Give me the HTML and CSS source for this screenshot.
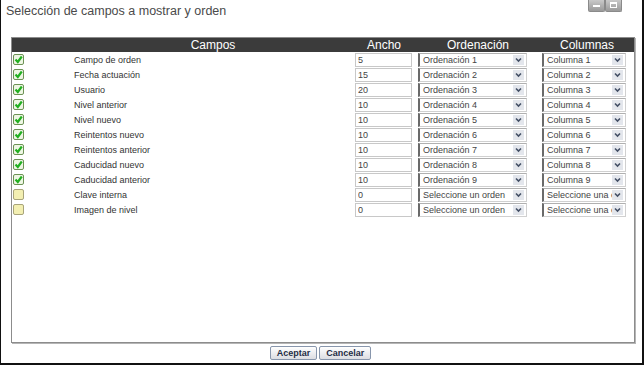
FILE: index.html
```html
<!DOCTYPE html>
<html lang="es">
<head>
<meta charset="utf-8">
<title>Selección de campos</title>
<link rel="stylesheet" href="styles.css">
</head>
<body>
<div class="dialog">
  <div class="titlebar">
    <div class="title">Selección de campos a mostrar y orden</div>
    <div class="winbtns">
      <span class="wb"><svg width="17" height="12" viewBox="0 0 17 12"><rect x="5" y="6" width="7" height="2" fill="#fff"/></svg></span>
      <span class="wb"><svg width="17" height="12" viewBox="0 0 17 12"><rect x="5.5" y="3.5" width="6" height="5" fill="none" stroke="#fff"/><rect x="5" y="3" width="7" height="2" fill="#fff"/></svg></span>
    </div>
  </div>
  <div class="panel">
    <div class="grid head">
      <div></div><div>Campos</div><div>Ancho</div><div>Ordenación</div><div>Columnas</div>
    </div>
    <div class="rows">
      <div class="grid row"><span class="cb on"></span><span class="lbl">Campo de orden</span><input class="w" value="5"><div class="sel s1"><span>Ordenación 1</span><i class="arr"></i></div><div class="sel s2"><span>Columna 1</span><i class="arr"></i></div></div>
      <div class="grid row"><span class="cb on"></span><span class="lbl">Fecha actuación</span><input class="w" value="15"><div class="sel s1"><span>Ordenación 2</span><i class="arr"></i></div><div class="sel s2"><span>Columna 2</span><i class="arr"></i></div></div>
      <div class="grid row"><span class="cb on"></span><span class="lbl">Usuario</span><input class="w" value="20"><div class="sel s1"><span>Ordenación 3</span><i class="arr"></i></div><div class="sel s2"><span>Columna 3</span><i class="arr"></i></div></div>
      <div class="grid row"><span class="cb on"></span><span class="lbl">Nivel anterior</span><input class="w" value="10"><div class="sel s1"><span>Ordenación 4</span><i class="arr"></i></div><div class="sel s2"><span>Columna 4</span><i class="arr"></i></div></div>
      <div class="grid row"><span class="cb on"></span><span class="lbl">Nivel nuevo</span><input class="w" value="10"><div class="sel s1"><span>Ordenación 5</span><i class="arr"></i></div><div class="sel s2"><span>Columna 5</span><i class="arr"></i></div></div>
      <div class="grid row"><span class="cb on"></span><span class="lbl">Reintentos nuevo</span><input class="w" value="10"><div class="sel s1"><span>Ordenación 6</span><i class="arr"></i></div><div class="sel s2"><span>Columna 6</span><i class="arr"></i></div></div>
      <div class="grid row"><span class="cb on"></span><span class="lbl">Reintentos anterior</span><input class="w" value="10"><div class="sel s1"><span>Ordenación 7</span><i class="arr"></i></div><div class="sel s2"><span>Columna 7</span><i class="arr"></i></div></div>
      <div class="grid row"><span class="cb on"></span><span class="lbl">Caducidad nuevo</span><input class="w" value="10"><div class="sel s1"><span>Ordenación 8</span><i class="arr"></i></div><div class="sel s2"><span>Columna 8</span><i class="arr"></i></div></div>
      <div class="grid row"><span class="cb on"></span><span class="lbl">Caducidad anterior</span><input class="w" value="10"><div class="sel s1"><span>Ordenación 9</span><i class="arr"></i></div><div class="sel s2"><span>Columna 9</span><i class="arr"></i></div></div>
      <div class="grid row"><span class="cb"></span><span class="lbl">Clave interna</span><input class="w" value="0"><div class="sel s1"><span>Seleccione un orden</span><i class="arr"></i></div><div class="sel s2"><span>Seleccione una columna</span><i class="arr"></i></div></div>
      <div class="grid row"><span class="cb"></span><span class="lbl">Imagen de nivel</span><input class="w" value="0"><div class="sel s1"><span>Seleccione un orden</span><i class="arr"></i></div><div class="sel s2"><span>Seleccione una columna</span><i class="arr"></i></div></div>
    </div>
  </div>
  <div class="footer">
    <button class="btn">Aceptar</button>
    <button class="btn">Cancelar</button>
  </div>
</div>
</body>
</html>
```
FILE: styles.css
```css
html, body {
  margin: 0;
  padding: 0;
  background: #fff;
}
.dialog {
  width: 644px;
  height: 365px;
  box-sizing: border-box;
  border-left: 1px solid #111;
  border-right: 2px solid #111;
  border-bottom: 2px solid #111;
  background: #fff;
  font-family: "Liberation Sans", Arial, sans-serif;
  display: flex;
  flex-direction: column;
}
.titlebar {
  height: 37px;
  display: flex;
  justify-content: space-between;
  align-items: flex-start;
  flex: none;
}
.title {
  font-size: 12.5px;
  color: #4a4a4a;
  padding: 4px 0 0 5px;
  line-height: 15px;
}
.winbtns {
  display: flex;
  gap: 0;
  margin-right: 20px;
}
.wb {
  display: block;
  width: 17px;
  height: 12px;
  background: linear-gradient(#c9c9c9, #9a9a9a);
  border: 1px solid #8a8a8a;
  border-top: none;
  box-sizing: border-box;
  border-radius: 0 0 2px 2px;
}
.wb svg { display: block; margin: -1px 0 0 -1px; }
.panel {
  margin-left: 10px;
  width: 624px;
  height: 306px;
  box-sizing: border-box;
  border: 1px solid #8c8c8c;
  box-shadow: 1px 1px 0 #b5b5b5;
  flex: none;
}
.grid {
  display: grid;
  grid-template-columns: 62px 278px 64px 124px 94px;
}
.head {
  height: 14px;
  background: #3b3b3b;
  color: #fff;
  font-size: 12px;
  line-height: 14px;
  text-align: center;
}
.rows {
  padding-top: 1px;
}
.row {
  height: 15px;
  align-items: start;
  font-size: 9px;
  color: #333;
}
.cb {
  display: block;
  width: 11px;
  height: 11px;
  margin: 1px 0 0 1px;
  box-sizing: border-box;
  border: 1px solid #a8a47a;
  border-radius: 2px;
  background: #f3efb2;
}
.cb.on {
  border-color: #6d9255;
  background: #eef6e4 url("data:image/svg+xml;utf8,<svg xmlns='http://www.w3.org/2000/svg' width='9' height='9'><path d='M1.5 4.5 L3.8 7 L7.8 1.5' fill='none' stroke='%2322b022' stroke-width='2.2'/></svg>") no-repeat center;
}
.lbl {
  line-height: 14px;
  white-space: nowrap;
}
.w {
  width: 57px;
  height: 14px;
  margin: 0 0 0 3px;
  padding: 0 2px;
  box-sizing: border-box;
  border: 1px solid #c8c8c8;
  font: 9px "Liberation Sans", Arial, sans-serif;
  color: #444;
  line-height: 12px;
  outline: none;
}
.sel {
  height: 14px;
  margin-left: 2px;
  box-sizing: border-box;
  border-left: 2px solid #6a6a6a;
  border-top: 1px solid #b0b0b0;
  border-right: 1px solid #d0d0d0;
  border-bottom: 1px solid #d0d0d0;
  display: flex;
  align-items: center;
  overflow: hidden;
  font-size: 9px;
  color: #444;
}
.s1 { width: 109px; }
.s2 { width: 84px; }
.sel span {
  flex: 1;
  min-width: 0;
  overflow: hidden;
  white-space: nowrap;
  padding-left: 3px;
  line-height: 12px;
}
.arr {
  flex: none;
  width: 11px;
  height: 10px;
  margin-right: 2px;
  background: #e3e6ec url("data:image/svg+xml;utf8,<svg xmlns='http://www.w3.org/2000/svg' width='11' height='10'><path d='M3 3.5 L5.5 6 L8 3.5' fill='none' stroke='%23445066' stroke-width='1.6'/></svg>") no-repeat center;
}
.footer {
  flex: 1;
  display: flex;
  justify-content: center;
  align-items: flex-start;
  gap: 2px;
  padding-top: 3px;
  padding-right: 2px;
}
.btn {
  height: 14px;
  padding: 0 6px;
  box-sizing: border-box;
  border: 1px solid #8896ac;
  border-radius: 2px;
  background: linear-gradient(#ffffff, #dcdde2);
  font: bold 9px "Liberation Sans", Arial, sans-serif;
  color: #1f2d44;
  line-height: 12px;
  margin: 0;
}
```
